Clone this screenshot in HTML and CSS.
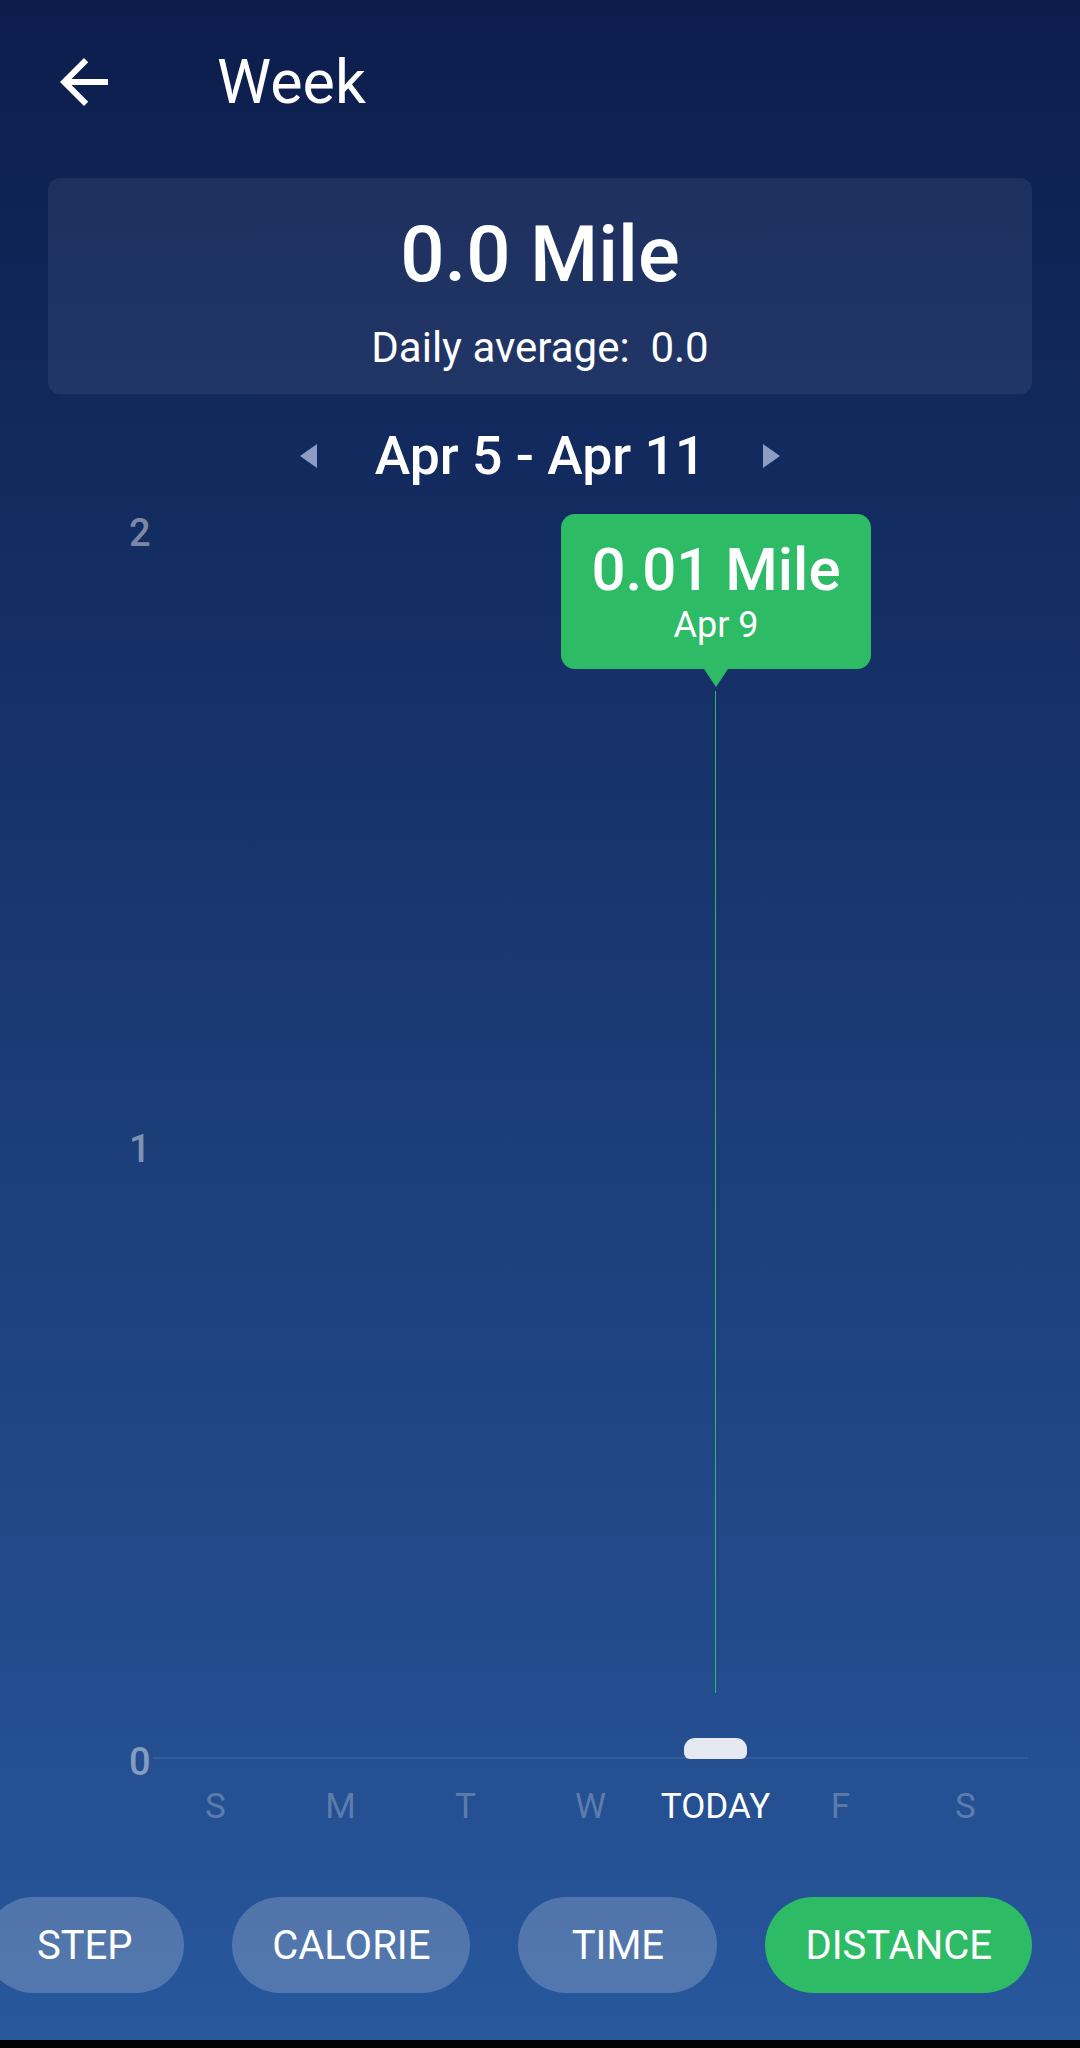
FILE: index.html
```html
<!DOCTYPE html>
<html lang="en">
<head>
<meta charset="utf-8">
<title>Week</title>
<link rel="stylesheet" href="styles.css">
</head>
<body>
<div class="screen">
  <header class="toolbar">
    <svg class="back" viewBox="0 0 24 24" width="72" height="72" aria-hidden="true">
      <path d="M20 11H7.83l5.59-5.59L12 4l-8 8 8 8 1.41-1.41L7.83 13H20v-2z" fill="#fff"/>
    </svg>
    <h1 class="title">Week</h1>
  </header>

  <section class="summary">
    <div class="total">0.0 Mile</div>
    <div class="average">Daily average:&nbsp; 0.0</div>
  </section>

  <nav class="range">
    <span class="tri tri-left"></span>
    <span class="range-text">Apr 5 - Apr 11</span>
    <span class="tri tri-right"></span>
  </nav>

  <section class="chart">
    <div class="ylabel" style="top:32px">2</div>
    <div class="ylabel" style="top:648px">1</div>
    <div class="ylabel" style="top:1261px">0</div>
    <div class="axis"></div>
    <div class="marker" style="left:715px"></div>
    <div class="bar" style="left:684px"></div>
    <div class="tip" style="left:561px">
      <div class="tip-value">0.01 Mile</div>
      <div class="tip-date">Apr 9</div>
    </div>
  </section>

  <div class="days">
    <span>S</span><span>M</span><span>T</span><span>W</span><span class="today">TODAY</span><span>F</span><span>S</span>
  </div>

  <div class="tabs">
    <button class="tab">STEP</button>
    <button class="tab">CALORIE</button>
    <button class="tab">TIME</button>
    <button class="tab active">DISTANCE</button>
  </div>

  <div class="navbar"></div>
</div>
</body>
</html>
```

FILE: styles.css
```css
* { box-sizing: border-box; }
html, body { margin: 0; padding: 0; }
body {
  width: 1080px;
  height: 2048px;
  overflow: hidden;
  font-family: Roboto, "Noto Sans", "Liberation Sans", sans-serif;
  color: #fff;
  background: #0c1d4c;
}
.screen {
  width: 1080px;
  height: 2048px;
  display: flex;
  flex-direction: column;
  background: linear-gradient(180deg, #0c1d4c 0px, #1a3a74 1020px, #28579c 2040px);
}
.toolbar {
  height: 164px;
  display: flex;
  align-items: center;
  padding-left: 48px;
  flex-shrink: 0;
}
.back { display: block; flex-shrink: 0; }
.title {
  margin: 0 0 0 97px;
  font-size: 61px;
  font-weight: 400;
  line-height: 1;
}
.summary {
  margin: 14px 48px 0;
  height: 216px;
  border-radius: 12px;
  background: rgba(255,255,255,0.065);
  padding-top: 38px;
  text-align: center;
  flex-shrink: 0;
}
.total {
  font-size: 78px;
  line-height: 78px;
  font-weight: 500;
}
.average {
  margin-top: 33px;
  font-size: 42px;
  line-height: 42px;
}
.range {
  margin-top: 36px;
  height: 52px;
  display: flex;
  align-items: center;
  justify-content: center;
  gap: 58px;
  flex-shrink: 0;
}
.range-text {
  font-size: 53.5px;
  line-height: 52px;
  font-weight: 500;
}
.tri {
  width: 0;
  height: 0;
  border-top: 12px solid transparent;
  border-bottom: 12px solid transparent;
}
.tri-left { border-right: 17px solid #8d9cc2; }
.tri-right { border-left: 17px solid #8d9cc2; }
.chart {
  position: relative;
  height: 1288px;
  flex-shrink: 0;
}
.ylabel {
  position: absolute;
  left: 129px;
  font-size: 38px;
  line-height: 38px;
  font-weight: 500;
  color: rgba(255,255,255,0.45);
}
.axis {
  position: absolute;
  left: 153px;
  width: 875px;
  top: 1275px;
  height: 2px;
  background: rgba(255,255,255,0.07);
}
.marker {
  position: absolute;
  top: 209px;
  height: 1002px;
  width: 1px;
  background: #2dbb66;
}
.bar {
  position: absolute;
  top: 1256px;
  width: 63px;
  height: 21px;
  border-radius: 11px 11px 6px 6px;
  background: #e6e9f1;
}
.tip {
  position: absolute;
  top: 32px;
  width: 310px;
  height: 155px;
  border-radius: 14px;
  background: #2dbb66;
  text-align: center;
  padding-top: 26px;
}
.tip::after {
  content: "";
  position: absolute;
  left: 143px;
  bottom: -18px;
  border-left: 12px solid transparent;
  border-right: 12px solid transparent;
  border-top: 18px solid #2dbb66;
}
.tip-value {
  font-size: 60px;
  line-height: 60px;
  font-weight: 500;
}
.tip-date {
  margin-top: 7px;
  font-size: 36px;
  line-height: 36px;
}
.days {
  margin: 17px 0 0 153px;
  width: 875px;
  display: grid;
  grid-template-columns: repeat(7, 1fr);
  text-align: center;
  font-size: 35px;
  line-height: 40px;
  color: rgba(255,255,255,0.26);
  flex-shrink: 0;
}
.days .today { color: #fff; }
.tabs {
  margin-top: 70px;
  display: flex;
  justify-content: flex-end;
  gap: 48px;
  padding-right: 48px;
  overflow: hidden;
  flex-shrink: 0;
}
.tab {
  flex-shrink: 0;
  height: 96px;
  min-width: 199px;
  padding: 0 40px;
  border: none;
  border-radius: 48px;
  background: rgba(255,255,255,0.2);
  color: #fff;
  font-family: Roboto, "Noto Sans", "Liberation Sans", sans-serif;
  font-size: 40px;
  font-weight: 400;
}
.tab.active { background: #2dbb66; }
.navbar {
  margin-top: auto;
  height: 8px;
  background: #000;
  flex-shrink: 0;
}
```
